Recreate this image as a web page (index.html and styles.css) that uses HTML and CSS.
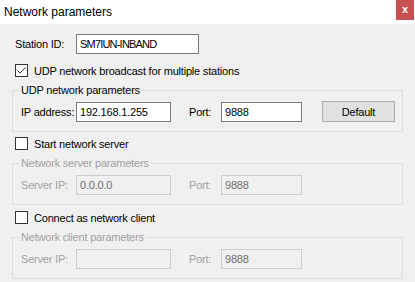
FILE: index.html
```html
<!DOCTYPE html>
<html lang="en">
<head>
    <meta charset="UTF-8">
    <title>Network parameters</title>
    <link rel="stylesheet" href="styles.css">
</head>
<body>
    <div class="titlebar">
        <span class="title">Network parameters</span>
        <span class="close">x</span>
    </div>

    <div class="content">
        <div class="station">
            <label class="station-label">Station ID:</label>
            <input class="field station-field" type="text" value="SM7IUN-INBAND">
        </div>

        <label class="check">
            <span class="box">
                <svg width="11" height="11" viewBox="0 0 11 11"><path d="M1.5 5.5 L4 8 L9.5 2.5" fill="none" stroke="#333" stroke-width="1"/></svg>
            </span>
            UDP network broadcast for multiple stations
        </label>

        <fieldset class="group">
            <legend>UDP network parameters</legend>
            <div class="fields">
                <label class="lbl">IP address:</label>
                <input class="field ip" type="text" value="192.168.1.255">
                <label class="lbl port-lbl">Port:</label>
                <input class="field port" type="text" value="9888">
                <button class="btn">Default</button>
            </div>
        </fieldset>

        <label class="check">
            <span class="box"></span>
            Start network server
        </label>

        <fieldset class="group disabled">
            <legend>Network server parameters</legend>
            <div class="fields">
                <label class="lbl">Server IP:</label>
                <input class="field ip" type="text" value="0.0.0.0" disabled>
                <label class="lbl port-lbl">Port:</label>
                <input class="field port" type="text" value="9888" disabled>
            </div>
        </fieldset>

        <label class="check check-last">
            <span class="box"></span>
            Connect as network client
        </label>

        <fieldset class="group disabled">
            <legend>Network client parameters</legend>
            <div class="fields">
                <label class="lbl">Server IP:</label>
                <input class="field ip" type="text" value="" disabled>
                <label class="lbl port-lbl">Port:</label>
                <input class="field port" type="text" value="9888" disabled>
            </div>
        </fieldset>
    </div>
</body>
</html>
```

FILE: styles.css
```css
body {
    margin: 0;
    background-color: #f0f0f0;
    font-family: "Liberation Sans", Arial, sans-serif;
    font-size: 11px;
    letter-spacing: -0.2px;
    color: #000;
}

.titlebar {
    height: 24px;
    background-color: #fff;
    display: flex;
    justify-content: space-between;
    align-items: flex-start;
    letter-spacing: 0;
}

.title {
    font-size: 12px;
    line-height: 14px;
    padding: 5px 0 0 4px;
}

.close {
    width: 18px;
    height: 20px;
    margin-right: 1px;
    background-color: #c75050;
    color: #fff;
    font-weight: bold;
    font-size: 11px;
    line-height: 19px;
    text-align: center;
}

.content {
    padding: 10px 12px 0;
}

.station {
    display: flex;
    align-items: center;
    height: 20px;
    padding-left: 3px;
}

.station-label {
    width: 61px;
    white-space: nowrap;
}

.field {
    box-sizing: border-box;
    flex-shrink: 0;
    height: 20px;
    margin: 0;
    padding: 0 3px;
    border: 1px solid #7a7a7a;
    background-color: #fff;
    font-family: inherit;
    font-size: inherit;
    letter-spacing: inherit;
    color: #000;
    outline: none;
}

.field:disabled {
    border-color: #cccccc;
    background-color: #f0f0f0;
    color: #6d6d6d;
}

.station-field {
    width: 123px;
    letter-spacing: -0.8px;
}

.check {
    display: flex;
    align-items: center;
    gap: 6px;
    height: 13px;
    margin-top: 10px;
    padding-left: 3px;
    white-space: nowrap;
}

.box {
    box-sizing: border-box;
    width: 13px;
    height: 13px;
    border: 1px solid #333;
    background-color: #fff;
    display: flex;
}

.group {
    margin: 7px 0 0;
    padding: 4px 8px 9px;
    border: 1px solid #dcdcdc;
    min-width: 0;
}

.group + .check {
    margin-top: 5px;
}

.group + .check-last {
    margin-top: 6px;
}

.group legend {
    line-height: 13px;
    padding: 0 2px;
    margin-left: -2px;
}

.disabled legend,
.disabled .lbl {
    color: #a0a0a0;
}

.fields {
    display: flex;
    align-items: flex-start;
    height: 21px;
}

.lbl {
    flex-shrink: 0;
    white-space: nowrap;
    line-height: 20px;
    margin-top: 1px;
    width: 55px;
}

.fields .field {
    margin-top: 1px;
}

.ip {
    width: 95px;
}

.port-lbl {
    width: 32px;
    margin-left: 18px;
}

.port {
    width: 81px;
}

.btn {
    box-sizing: border-box;
    flex-shrink: 0;
    width: 73px;
    height: 21px;
    margin-left: 20px;
    padding: 0;
    border: 1px solid #adadad;
    background-color: #e1e1e1;
    font-family: inherit;
    font-size: inherit;
    letter-spacing: inherit;
    color: #000;
}
```
